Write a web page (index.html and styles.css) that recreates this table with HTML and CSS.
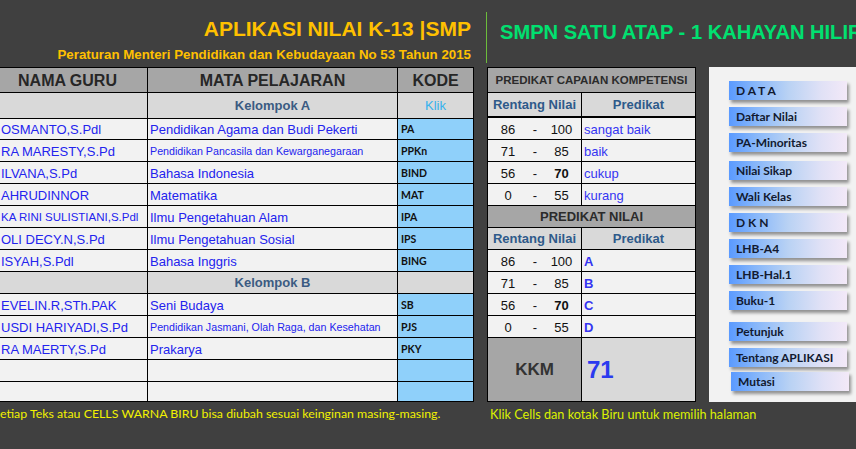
FILE: index.html
```html
<!DOCTYPE html>
<html lang="id">
<head>
<meta charset="utf-8">
<title>Aplikasi Nilai K-13 SMP</title>
<link rel="stylesheet" href="styles.css">
</head>
<body>
<header class="top">
  <div class="brand">
    <h1 class="app-title">APLIKASI NILAI K-13 |SMP</h1>
    <p class="app-sub">Peraturan Menteri Pendidikan dan Kebudayaan No 53 Tahun 2015</p>
  </div>
  <div class="divider"></div>
  <h2 class="school">SMPN SATU ATAP - 1 KAHAYAN HILIR</h2>
</header>

<main class="content">
  <div class="guru">
    <div class="cell hd hd-name">NAMA GURU</div>
    <div class="cell hd">MATA PELAJARAN</div>
    <div class="cell hd">KODE</div>

    <div class="cell grp"></div>
    <div class="cell grp grp-title">Kelompok A</div>
    <div class="cell grp klik">Klik</div>

    <div class="cell name">OSMANTO,S.Pdl</div>
    <div class="cell subj">Pendidikan Agama dan Budi Pekerti</div>
    <div class="cell kode">PA</div>

    <div class="cell name">RA MARESTY,S.Pd</div>
    <div class="cell subj sm">Pendidikan Pancasila dan Kewarganegaraan</div>
    <div class="cell kode">PPKn</div>

    <div class="cell name">ILVANA,S.Pd</div>
    <div class="cell subj">Bahasa Indonesia</div>
    <div class="cell kode">BIND</div>

    <div class="cell name">AHRUDINNOR</div>
    <div class="cell subj">Matematika</div>
    <div class="cell kode">MAT</div>

    <div class="cell name nm-sm">KA RINI SULISTIANI,S.Pdl</div>
    <div class="cell subj">Ilmu Pengetahuan Alam</div>
    <div class="cell kode">IPA</div>

    <div class="cell name">OLI DECY.N,S.Pd</div>
    <div class="cell subj">Ilmu Pengetahuan Sosial</div>
    <div class="cell kode">IPS</div>

    <div class="cell name">ISYAH,S.Pdl</div>
    <div class="cell subj">Bahasa Inggris</div>
    <div class="cell kode">BING</div>

    <div class="cell grp"></div>
    <div class="cell grp grp-title">Kelompok B</div>
    <div class="cell grp"></div>

    <div class="cell name">EVELIN.R,STh.PAK</div>
    <div class="cell subj">Seni Budaya</div>
    <div class="cell kode">SB</div>

    <div class="cell name">USDI HARIYADI,S.Pd</div>
    <div class="cell subj sm">Pendidikan Jasmani, Olah Raga, dan Kesehatan</div>
    <div class="cell kode">PJS</div>

    <div class="cell name">RA MAERTY,S.Pd</div>
    <div class="cell subj">Prakarya</div>
    <div class="cell kode">PKY</div>

    <div class="cell name"></div>
    <div class="cell subj"></div>
    <div class="cell kode"></div>

    <div class="cell name"></div>
    <div class="cell subj"></div>
    <div class="cell kode"></div>
  </div>

  <div class="predikat">
    <div class="pcell ptitle ptitle-sm">PREDIKAT CAPAIAN KOMPETENSI</div>
    <div class="pcell psub">Rentang Nilai</div>
    <div class="pcell psub">Predikat</div>

    <div class="pcell range"><span>86</span><span>-</span><span>100</span></div>
    <div class="pcell pval">sangat baik</div>
    <div class="pcell range"><span>71</span><span>-</span><span>85</span></div>
    <div class="pcell pval">baik</div>
    <div class="pcell range"><span>56</span><span>-</span><span class="b">70</span></div>
    <div class="pcell pval">cukup</div>
    <div class="pcell range"><span>0</span><span>-</span><span>55</span></div>
    <div class="pcell pval">kurang</div>

    <div class="pcell ptitle">PREDIKAT NILAI</div>
    <div class="pcell psub">Rentang Nilai</div>
    <div class="pcell psub">Predikat</div>

    <div class="pcell range"><span>86</span><span>-</span><span>100</span></div>
    <div class="pcell pval letter">A</div>
    <div class="pcell range"><span>71</span><span>-</span><span>85</span></div>
    <div class="pcell pval letter">B</div>
    <div class="pcell range"><span>56</span><span>-</span><span class="b">70</span></div>
    <div class="pcell pval letter">C</div>
    <div class="pcell range"><span>0</span><span>-</span><span>55</span></div>
    <div class="pcell pval letter">D</div>

    <div class="pcell kkm-label">KKM</div>
    <div class="pcell kkm-val">71</div>
  </div>

  <nav class="menu">
    <div class="btn">D A T A</div>
    <div class="btn">Daftar Nilai</div>
    <div class="btn">PA-Minoritas</div>
    <div class="btn gap2">Nilai Sikap</div>
    <div class="btn">Wali Kelas</div>
    <div class="btn">D K N</div>
    <div class="btn">LHB-A4</div>
    <div class="btn">LHB-Hal.1</div>
    <div class="btn">Buku-1</div>
    <div class="btn gap5">Petunjuk</div>
    <div class="btn">Tentang APLIKASI</div>
    <div class="btn shifted">Mutasi</div>
  </nav>
</main>

<footer class="notes">
  <span class="note-left">etiap Teks atau CELLS WARNA BIRU bisa diubah sesuai keinginan masing-masing.</span>
  <span class="note-right">Klik Cells dan kotak Biru untuk memilih halaman</span>
</footer>
</body>
</html>
```

FILE: styles.css
```css
* { box-sizing: border-box; }
html, body { margin: 0; padding: 0; }
body {
  background: #404040;
  width: 856px;
  height: 449px;
  overflow: hidden;
  font-family: "Liberation Sans", Arial, sans-serif;
}

/* header */
.top { display: flex; align-items: flex-start; height: 67px; }
.brand { flex: none; width: 471px; text-align: right; }
.app-title {
  margin: 17px 0 0;
  font-size: 21px;
  line-height: 24px;
  font-weight: bold;
  color: #ffc000;
  white-space: nowrap;
}
.app-sub {
  margin: 6px 0 0;
  font-size: 13.3px;
  line-height: 15px;
  font-weight: bold;
  color: #ffc000;
  white-space: nowrap;
}
.divider {
  flex: none;
  width: 1px;
  height: 51px;
  margin: 12px 0 0 15px;
  background: #6cbd3b;
}
.school {
  margin: 20px 0 0 13px;
  font-size: 20.1px;
  line-height: 24px;
  font-weight: bold;
  color: #00e070;
  white-space: nowrap;
}

/* main */
.content { display: flex; align-items: flex-start; height: 335px; }

.guru {
  flex: none;
  display: grid;
  grid-template-columns: 148px 250px 76px;
  grid-template-rows: 25px 26px 21px repeat(11, 22px) 20px;
  border-top: 1px solid #000;
}
.cell {
  display: flex;
  align-items: flex-end;
  padding: 0 2px 2px;
  border-right: 1px solid #000;
  border-bottom: 1px solid #000;
  background: #f2f2f2;
  color: #2323ee;
  font-size: 13px;
  line-height: 15px;
  white-space: nowrap;
  overflow: hidden;
}
.cell.name { padding-left: 1px; }
.cell.nm-sm { font-size: 11.5px; }
.cell.sm { font-size: 10.7px; }
.cell.hd {
  align-items: center;
  justify-content: center;
  padding: 0;
  background: #a6a6a6;
  color: #262626;
  font-size: 16px;
  font-weight: bold;
}
.cell.hd-name { padding-right: 12px; }
.cell.grp {
  align-items: center;
  justify-content: center;
  padding: 0;
  background: #d9d9d9;
  color: #3b5b82;
  font-size: 13px;
  font-weight: bold;
}
.cell.klik { color: #35b2ee; font-weight: normal; }
.cell.kode {
  background: #8fd0fa;
  color: #111;
  font-family: Lato, "Liberation Sans", sans-serif;
  font-size: 10.5px;
  font-weight: bold;
  padding-left: 3px;
  padding-bottom: 3px;
  line-height: 13px;
}

/* predikat tables */
.predikat {
  flex: none;
  margin-left: 13px;
  display: grid;
  grid-template-columns: 94px 114px;
  grid-template-rows: 25px 25px repeat(10, 22px) 64px;
  border-top: 1px solid #000;
  border-left: 1px solid #000;
}
.pcell {
  display: flex;
  align-items: flex-end;
  padding: 0 2px 2px;
  border-right: 1px solid #000;
  border-bottom: 1px solid #000;
  background: #f2f2f2;
  font-size: 13px;
  line-height: 15px;
  white-space: nowrap;
}
.ptitle {
  grid-column: 1 / 3;
  align-items: center;
  justify-content: center;
  padding: 0;
  background: #a6a6a6;
  color: #2b2b2b;
  font-weight: bold;
}
.ptitle-sm { font-size: 11.5px; }
.psub {
  align-items: center;
  justify-content: center;
  padding: 0;
  background: #d9d9d9;
  color: #2e5a8a;
  font-weight: bold;
}
.psub:nth-child(2), .psub:nth-child(3) { border-bottom-width: 2px; }
.range {
  display: grid;
  grid-template-columns: 40px 14px 1fr;
  align-items: end;
  padding: 0 0 2px;
  color: #111;
}
.range span { text-align: center; }
.range .b { font-weight: bold; }
.pval { color: #3535f2; padding-left: 2px; }
.pval.letter { font-weight: bold; }
.kkm-label {
  align-items: center;
  justify-content: center;
  padding: 0;
  background: #a6a6a6;
  color: #333;
  font-size: 17px;
  font-weight: bold;
}
.kkm-val {
  align-items: center;
  padding: 0 0 0 5px;
  background: #d9d9d9;
  color: #2b3bef;
  font-size: 24px;
  line-height: 28px;
  font-weight: bold;
}

/* menu panel */
.menu {
  flex: 1;
  margin-left: 13px;
  height: 335px;
  background: #f2f2f2;
  padding: 14px 0 0 20px;
  display: flex;
  flex-direction: column;
  gap: 7px;
}
.btn {
  width: 118px;
  height: 19px;
  padding-left: 7px;
  line-height: 19px;
  font-family: Lato, "Liberation Sans", sans-serif;
  font-size: 12px;
  font-weight: bold;
  color: #121a30;
  background: linear-gradient(90deg, #5a9aff 0%, #86b6fa 22%, #b9d2f4 50%, #e0e1f6 78%, #f3e9f8 100%);
  box-shadow: 2px 3px 3px rgba(0, 0, 0, 0.4);
  white-space: nowrap;
}
.btn.gap2 { margin-top: 2px; }
.btn.gap5 { margin-top: 5px; }
.btn.shifted { margin-top: -2px; margin-left: 2px; }

/* footer notes */
.notes {
  display: flex;
  padding-top: 5px;
  font-family: Lato, "Liberation Sans", sans-serif;
  line-height: 14px;
  white-space: nowrap;
}
.note-left { flex: none; width: 490px; font-size: 12.35px; color: #f2f200; }
.note-right { font-size: 12.7px; color: #dcf000; }
```
